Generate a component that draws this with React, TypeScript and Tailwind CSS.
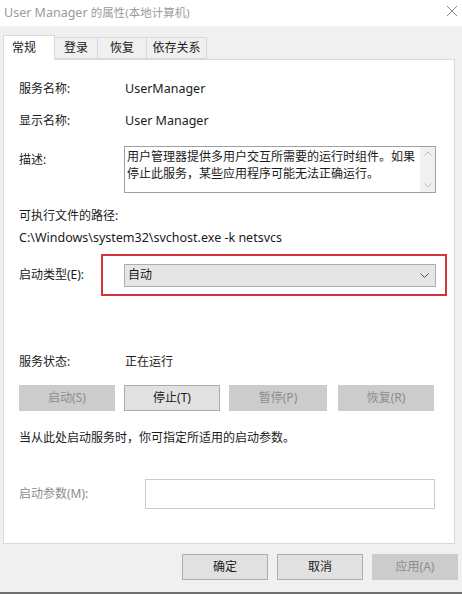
import React from "react";

const font = { fontFamily: '"Noto Sans", "Noto Sans CJK SC", sans-serif' };

function Btn({ children, disabled, className = "" }: { children: React.ReactNode; disabled?: boolean; className?: string }) {
  return (
    <div
      className={
        "flex h-[26px] items-center justify-center border text-[12px] " +
        (disabled
          ? "border-[#cccccc] bg-[#cccccc] text-[#8c8c8c] "
          : "border-[#adadad] bg-[#e1e1e1] text-[#1a1a1a] ") +
        className
      }
    >
      {children}
    </div>
  );
}

export default function App() {
  return (
    <div className="relative h-[594px] w-[462px] overflow-hidden bg-[#f0f0f0] text-[#1a1a1a]" style={font}>
      {/* title bar */}
      <div className="flex h-[26px] items-center justify-between bg-white pl-[4px] pr-[4px]">
        <span className="text-[12.5px] text-[#9a9a9a]">
          User Manager <span className="text-[11.5px]">的属性(本地计算机)</span>
        </span>
        <svg width="12" height="12" viewBox="0 0 12 12" className="mb-[4px]">
          <path d="M1 1 L11 11 M11 1 L1 11" stroke="#888" strokeWidth="1" />
        </svg>
      </div>

      {/* tabs */}
      <div className="mt-[9px] flex items-end pl-[3px] text-[12px]">
        <div className="relative z-10 -mb-px flex h-[25px] w-[52px] items-start border border-b-0 border-[#d9d9d9] bg-white pl-[8px] pt-[3px]">
          常规
        </div>
        <div className="flex h-[22px] w-[43px] items-center justify-center border border-l-0 border-[#d9d9d9] bg-[#f0f0f0]">登录</div>
        <div className="flex h-[22px] w-[49px] items-center justify-center border border-l-0 border-[#d9d9d9] bg-[#f0f0f0]">恢复</div>
        <div className="flex h-[22px] w-[60px] items-center justify-center border border-l-0 border-[#d9d9d9] bg-[#f0f0f0]">依存关系</div>
      </div>

      {/* panel */}
      <div className="relative mx-[3px] h-[485px] w-[452px] border border-[#d9d9d9] bg-white pl-[15px] text-[12px]">
        <div className="mt-[20px] flex h-[18px] items-center">
          <span className="w-[106px]">服务名称:</span>
          <span className="text-[12.5px]">UserManager</span>
        </div>
        <div className="mt-[14px] flex h-[18px] items-center">
          <span className="w-[106px]">显示名称:</span>
          <span className="text-[12.5px]">User Manager</span>
        </div>
        <div className="mt-[16px] flex">
          <span className="mt-[5px] w-[105px]">描述:</span>
          <div className="flex h-[47px] w-[312px] border border-[#a0a0a0]">
            <div className="flex-1 pl-[2px] pt-[1px] leading-[17px]">
              用户管理器提供多用户交互所需要的运行时组件。如果停止此服务，某些应用程序可能无法正确运行。
            </div>
            <div className="flex w-[15px] flex-col items-center justify-between bg-[#f0f0f0] py-[4px]">
              <svg width="8" height="5" viewBox="0 0 8 5"><path d="M0.5 4.5 L4 1 L7.5 4.5" stroke="#c0c0c0" fill="none" /></svg>
              <svg width="8" height="5" viewBox="0 0 8 5"><path d="M0.5 0.5 L4 4 L7.5 0.5" stroke="#c0c0c0" fill="none" /></svg>
            </div>
          </div>
        </div>
        <div className="mt-[14px] h-[18px] leading-[18px]">可执行文件的路径:</div>
        <div className="mt-[4px] h-[18px] text-[12.5px] leading-[18px]">C:\Windows\system32\svchost.exe -k netsvcs</div>
        <div className="mt-[7px] flex items-center">
          <span className="w-[82px]">启动类型(E):</span>
          <div className="flex h-[42px] w-[346px] items-center border-[2px] border-[#d6343d] pl-[21px]">
            <div className="flex h-[23px] w-[312px] items-center justify-between border border-[#adadad] bg-[#e5e5e5] pl-[3px] pr-[6px]">
              <span>自动</span>
              <svg width="9" height="5" viewBox="0 0 9 5"><path d="M0.5 0.5 L4.5 4.5 L8.5 0.5" stroke="#555" fill="none" /></svg>
            </div>
          </div>
        </div>

        <div className="mt-[57px] flex h-[18px] items-center">
          <span className="w-[106px]">服务状态:</span>
          <span>正在运行</span>
        </div>
        <div className="mt-[14px] flex">
          <Btn disabled className="w-[96px]">启动(S)</Btn>
          <Btn className="ml-[9px] w-[96px]">停止(T)</Btn>
          <Btn disabled className="ml-[9px] w-[98px]">暂停(P)</Btn>
          <Btn disabled className="ml-[11px] w-[96px]">恢复(R)</Btn>
        </div>
        <div className="mt-[18px] h-[18px] leading-[18px]">当从此处启动服务时，你可指定所适用的启动参数。</div>
        <div className="mt-[32px] flex items-center">
          <span className="w-[126px] text-[#8c8c8c]">启动参数(M):</span>
          <div className="h-[30px] w-[290px] border border-[#cccccc] bg-white" />
        </div>
      </div>

      {/* bottom buttons */}
      <div className="mt-[10px] flex justify-end pr-[4px]">
        <Btn className="w-[86px]">确定</Btn>
        <Btn className="ml-[9px] w-[86px]">取消</Btn>
        <Btn disabled className="ml-[9px] w-[86px]">应用(A)</Btn>
      </div>

      <div className="absolute bottom-0 left-0 h-[2px] w-full bg-[#707070]" />
    </div>
  );
}
